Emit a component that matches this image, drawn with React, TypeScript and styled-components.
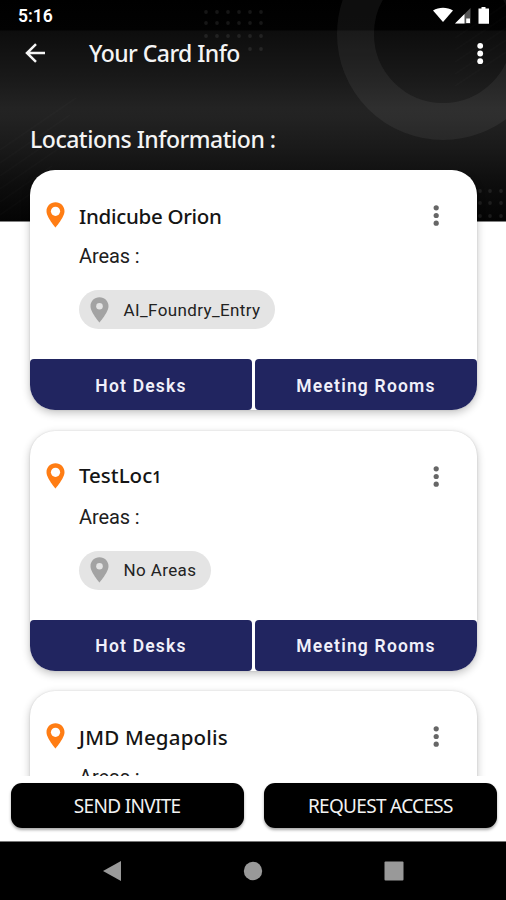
import React from "react";
import styled, { createGlobalStyle } from "styled-components";

const GlobalStyle = createGlobalStyle`
  * { box-sizing: border-box; }
  body { margin: 0; background: #fff; }
`;

const humanist = `"Noto Sans", "Open Sans", sans-serif`;

const Screen = styled.main`
  position: relative;
  display: flex;
  flex-direction: column;
  width: 506px;
  height: 900px;
  overflow: hidden;
  font-family: Roboto, sans-serif;
  background: #fff
    linear-gradient(#000 0, #020202 30px, #0d0d0d 31px, #191919 78px, #232323 108px, #222 118px, #191919 150px, #0d0d0d 185px, #040404 221px)
    no-repeat 0 0 / 100% 221.5px;
`;

const Backdrop = styled.svg`
  position: absolute;
  top: 0;
  left: 0;
`;

const StatusBar = styled.div`
  position: relative;
  display: flex;
  align-items: center;
  justify-content: space-between;
  height: 30px;
  padding: 2px 16px 0 18px;
  color: #fff;
  font-size: 17.5px;
  font-weight: 600;
`;

const AppBar = styled.header`
  position: relative;
  display: flex;
  align-items: center;
  height: 46px;
  padding: 0 22px 0 25px;
  color: #f4f4f4;
`;

const Title = styled.h1`
  flex: 1;
  margin: 0 0 0 43px;
  font: 500 23px/30px ${humanist};
  letter-spacing: -0.55px;
`;

const Heading = styled.h2`
  position: relative;
  height: 94px;
  margin: 0;
  padding: 47px 30px 0;
  color: #f4f4f4;
  font: 500 23px/32px ${humanist};
  letter-spacing: -0.48px;
`;

const List = styled.section`
  position: relative;
  display: flex;
  flex: 1;
  flex-direction: column;
  gap: 20.5px;
  min-height: 0;
  padding: 0 29px 0 30px;
  overflow: hidden;
`;

const Card = styled.article`
  display: flex;
  flex: none;
  flex-direction: column;
  height: 240px;
  border-radius: 25px;
  background: #fff;
  box-shadow: 0 3px 8px rgba(0, 0, 0, 0.24), 0 0 2px rgba(0, 0, 0, 0.12);
`;

const CardHead = styled.div`
  display: flex;
  align-items: center;
  height: 50px;
  margin-top: 20px;
  padding: 0 37px 0 16px;
`;

const Name = styled.h3<{ $spacing: number }>`
  flex: 1;
  margin: 0 0 0 14px;
  padding-top: 1px;
  color: #151515;
  font: 500 20.5px/28px ${humanist};
  letter-spacing: ${(p) => p.$spacing}px;
`;

const SmallDigit = styled.span`
  font-size: 0.77em;
  font-weight: 600;
`;

const AreasLabel = styled.div`
  margin: 4px 0 0 49px;
  color: #202020;
  font-size: 20px;
  line-height: 24px;
  letter-spacing: -0.1px;
`;

const Chip = styled.div`
  display: flex;
  align-items: center;
  align-self: flex-start;
  gap: 15px;
  height: 39px;
  margin: 22px 0 0 49px;
  padding: 0 14.5px 0 10.5px;
  border-radius: 20px;
  background: #e4e4e4;
  color: #222;
  font-size: 17px;
  letter-spacing: 0.38px;
`;

const Actions = styled.div`
  display: grid;
  grid-template-columns: 1fr 1fr;
  gap: 3px;
  height: 51px;
  margin-top: auto;
`;

const NavyButton = styled.button<{ $side: "left" | "right" }>`
  border: 0;
  padding: 2px 0 0;
  border-radius: ${(p) => (p.$side === "left" ? "4px 4px 4px 25px" : "4px 4px 25px 4px")};
  background: #212560;
  color: #f0f0fa;
  font: 600 17.5px Roboto, sans-serif;
  letter-spacing: 1.2px;
`;

const Footer = styled.footer`
  position: relative;
  display: grid;
  grid-template-columns: 1fr 1fr;
  gap: 20px;
  height: 65px;
  padding: 7px 9px 13px 10.5px;
  background: #fff;
`;

const BlackButton = styled.button`
  border: 0;
  padding: 0;
  border-radius: 11px;
  background: #000;
  box-shadow: 0 2px 3px rgba(0, 0, 0, 0.35);
  color: #f2f2f2;
  font: 400 19px/24px ${humanist};
  letter-spacing: -0.68px;
`;

const NavBar = styled.nav`
  display: flex;
  align-items: center;
  justify-content: space-between;
  height: 59px;
  padding: 0 102px;
  border-top: 1px solid #777;
  background: #000;
`;

const Pin = ({ color, hole, r }: { color: string; hole: string; r: number }) => (
  <svg width="19" height="26" viewBox="0 0 19 26">
    <path d="M9.5 0.3C4.3 0.3.5 4.2.5 9.2c0 6 9 16.3 9 16.3s9-10.3 9-16.3c0-5-3.8-8.900-9-8.900z" fill={color} />
    <circle cx="9.5" cy="9.3" r={r} fill={hole} />
  </svg>
);

const Dots = ({ color, r }: { color: string; r: number }) => (
  <svg width="8" height="24" viewBox="0 0 8 24" fill={color}>
    <circle cx="4.2" cy="4.800" r={r} />
    <circle cx="4.2" cy="12.500" r={r} />
    <circle cx="4.2" cy="20.200" r={r} />
  </svg>
);

const topDots = [12, 23, 36, 49].flatMap((y) =>
  [206, 217, 228, 239, 250, 261].filter((x) => y < 49 || x > 240).map((x) => [x, y])
);
const sideDots = [191, 203, 216].flatMap((y) => [480, 490, 501].map((x) => [x, y]));

const places = [
  { name: "Indicube Orion", area: "AI_Foundry_Entry", spacing: -0.3 },
  { name: "TestLoc1", area: "No Areas", spacing: 0 },
  { name: "JMD Megapolis", area: null, spacing: 0.2 },
];

export default function App() {
  return (
    <Screen>
      <GlobalStyle />
      <Backdrop width="506" height="221" viewBox="0 0 506 221">
        <circle cx="443" cy="34" r="87.500" fill="none" stroke="#fff" strokeOpacity="0.055" strokeWidth="37" />
        <g fill="#fff" fillOpacity="0.085">
          {[...topDots, ...sideDots].map(([x, y]) => (
            <circle key={`${x}-${y}`} cx={x} cy={y} r="1.9" />
          ))}
        </g>
        <g stroke="#fff" strokeOpacity="0.014" strokeWidth="2">
          {[0, 1, 2, 3, 4, 5].map((i) => (
            <path key={i} d={`M0 ${150 + i * 13}L${76 - i * 6} ${98 + i * 17}`} />
          ))}
          {[0, 1, 2, 3, 4].map((i) => (
            <path key={i} d={`M455 ${38 + i * 12}L506 ${4 + i * 12}`} />
          ))}
        </g>
      </Backdrop>
      <StatusBar>
        <span>5:16</span>
        <svg width="57" height="18" viewBox="0 0 57 18">
          <path d="M0 3.5C5.8-.3 14.2-.3 20 3.5L10 15z" fill="#fff" />
          <path d="M22 16.500L37.500 1V16.500z" fill="#555" />
          <path d="M22 16.500L31.500 7V16.500zM33.200 11.500h3.800v4.500h-3.800z" fill="#fff" />
          <path d="M48.500 0h4v1.500h3.500v15.200H45.500V1.500h3z" fill="#fff" />
        </svg>
      </StatusBar>
      <AppBar>
        <svg width="21" height="20" viewBox="0 0 21 20" fill="none" stroke="#f4f4f4" strokeWidth="2.500">
          <path d="M20 10H2.500M11 1.200L2 10l9 8.800" />
        </svg>
        <Title>Your Card Info</Title>
        <Dots color="#fff" r={2.9} />
      </AppBar>
      <Heading>Locations Information :</Heading>
      <List>
        {places.map((p) => (
          <Card key={p.name}>
            <CardHead>
              <Pin color="#ff7d14" hole="#fff" r={4.6} />
              <Name $spacing={p.spacing}>
                {p.name.replace(/\d$/, "")}
                {/\d$/.test(p.name) && <SmallDigit>{p.name.slice(-1)}</SmallDigit>}
              </Name>
              <Dots color="#666" r={2.6} />
            </CardHead>
            <AreasLabel>Areas :</AreasLabel>
            {p.area && (
              <>
                <Chip>
                  <Pin color="#a3a3a3" hole="#e4e4e4" r={3.3} />
                  {p.area}
                </Chip>
                <Actions>
                  <NavyButton $side="left">Hot Desks</NavyButton>
                  <NavyButton $side="right">Meeting Rooms</NavyButton>
                </Actions>
              </>
            )}
          </Card>
        ))}
      </List>
      <Footer>
        <BlackButton>SEND INVITE</BlackButton>
        <BlackButton>REQUEST ACCESS</BlackButton>
      </Footer>
      <NavBar>
        <svg width="20" height="22" viewBox="0 0 20 22">
          <path d="M1 11L19 1v20z" fill="#999" />
        </svg>
        <svg width="20" height="20" viewBox="0 0 20 20">
          <circle cx="10" cy="10" r="9.200" fill="#999" />
        </svg>
        <svg width="20" height="20" viewBox="0 0 20 20">
          <rect x="0.500" y="0.500" width="19" height="19" rx="1" fill="#999" />
        </svg>
      </NavBar>
    </Screen>
  );
}
